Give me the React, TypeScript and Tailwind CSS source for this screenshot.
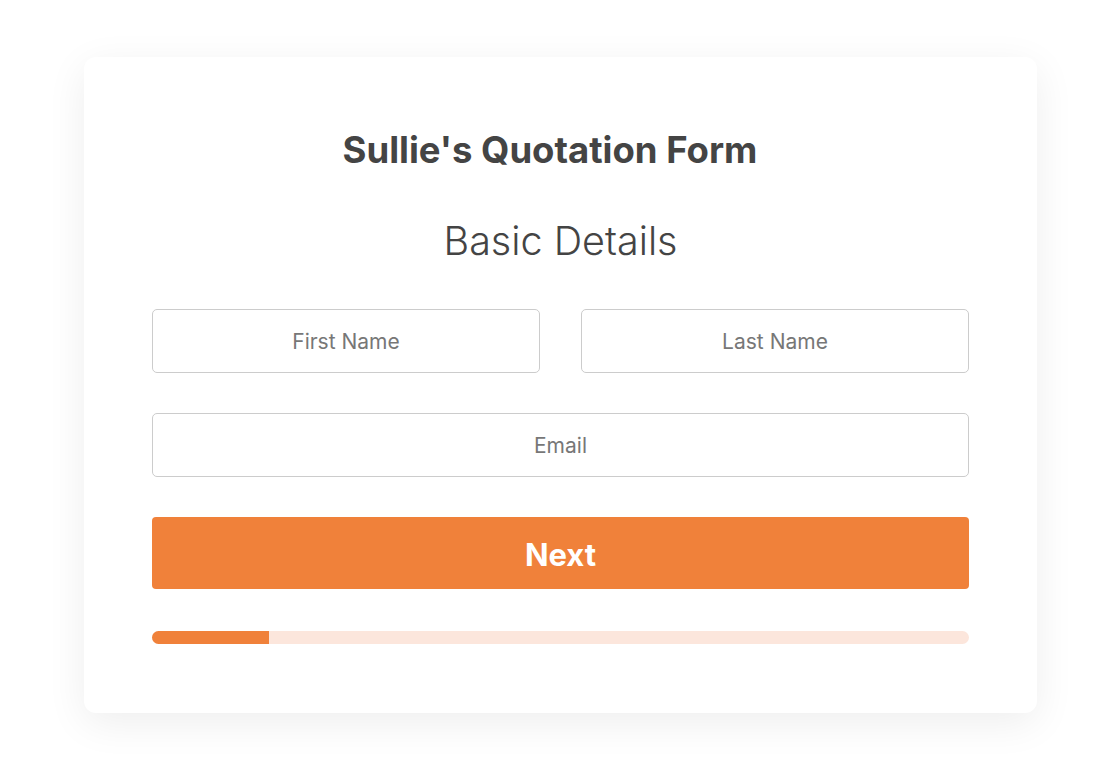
import React from 'react'

const fields = 'w-full h-16 rounded-[5px] border border-[#cccccc] bg-white text-center text-[21px] text-[#777777] placeholder:text-[#777777] outline-none'

const App = () => {
  const progress = 14.3

  return (
    <div className="min-h-[759px] w-full bg-white pt-[57px] pl-[84px] font-['Inter',sans-serif]">
      <div className="w-[953px] h-[656px] rounded-xl bg-white shadow-[0_10px_40px_rgba(0,0,0,0.07)] px-[68px] pt-[72px]">
        <h1 className="pr-[21px] text-center text-[36.5px] leading-[42px] font-bold text-[#444444]">Sullie's Quotation Form</h1>
        <h2 className="mt-[46px] text-center text-[39.5px] leading-[48px] font-light text-[#444444]">Basic Details</h2>

        <div className="mt-[44px] flex flex-col gap-10">
          <div className="grid grid-cols-2 gap-[41px]">
            <input className={fields} placeholder="First Name" />
            <input className={fields} placeholder="Last Name" />
          </div>
          <input className={fields} placeholder="Email" />
          <button className="h-[72px] w-full rounded bg-[#f0813a] pt-[4px] text-[31px] font-bold text-white">Next</button>
        </div>

        <div className="mt-[42px] h-[13px] w-full rounded-full bg-[#fce6dc] overflow-hidden">
          <div className="h-full bg-[#f0813a]" style={{ width: `${progress}%` }} />
        </div>
      </div>
    </div>
  )
}

export default App
